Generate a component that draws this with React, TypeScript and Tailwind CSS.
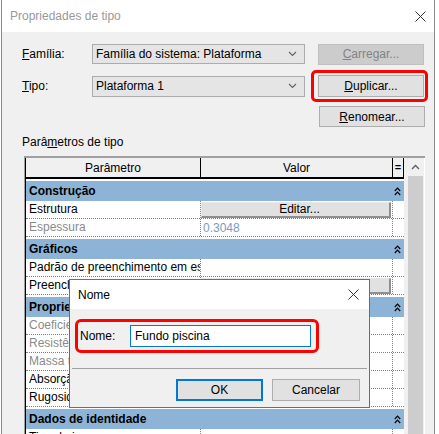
import type { ReactNode } from 'react';

const font = { fontFamily: '"Liberation Sans", Arial, sans-serif' };

type Item = { p: string; v?: string; dim?: boolean; button?: string };
type Group = { name: string; items: Item[] };

const groups: Group[] = [
  {
    name: 'Construção',
    items: [
      { p: 'Estrutura', button: 'Editar...' },
      { p: 'Espessura', v: '0.3048', dim: true },
    ],
  },
  {
    name: 'Gráficos',
    items: [
      { p: 'Padrão de preenchimento em escala grosseira' },
      { p: 'Preenchimento de cor em escala grosseira', button: 'Preto' },
    ],
  },
  {
    name: 'Propriedades analíticas',
    items: [
      { p: 'Coeficiente de transferência de calor (U)', dim: true },
      { p: 'Resistência térmica (R)', dim: true },
      { p: 'Massa térmica', dim: true },
      { p: 'Absorção', v: '0.700000' },
      { p: 'Rugosidade', v: '3' },
    ],
  },
  {
    name: 'Dados de identidade',
    items: [{ p: 'Tipo de imagem' }],
  },
];

function Chevron() {
  return (
    <svg width="9" height="6" viewBox="0 0 9 6" fill="none" stroke="#606060" strokeWidth="1.1" aria-hidden>
      <path d="M1 1l3.5 3.5L8 1" />
    </svg>
  );
}

function CloseX({ size = 11 }: { size?: number }) {
  return (
    <svg width={size} height={size} viewBox="0 0 11 11" fill="none" stroke="#333" strokeWidth="1" aria-hidden>
      <path d="M0.5 0.5l10 10M10.5 0.5l-10 10" />
    </svg>
  );
}

function Collapse() {
  return (
    <svg width="7" height="9" viewBox="0 0 7 9" fill="none" stroke="#000" strokeWidth="1.2" aria-hidden>
      <path d="M0.8 4L3.5 1.2 6.2 4" />
      <path d="M0.8 8L3.5 5.2 6.2 8" />
    </svg>
  );
}

function WinButton({ children, disabled }: { children: ReactNode; disabled?: boolean }) {
  return (
    <div
      className={
        disabled
          ? 'flex h-full w-full items-center justify-center border border-[#bfbfbf] bg-[#cccccc] text-[12px] text-[#838383]'
          : 'flex h-full w-full items-center justify-center border border-[#adadad] bg-[#e1e1e1] text-[12px] text-black'
      }
    >
      {children}
    </div>
  );
}

function Combo({ text }: { text: string }) {
  return (
    <div className="flex h-full w-[213px] items-center border border-[#acacac] bg-[#e5e5e5] pl-[3px] pr-[7px] text-[12px]">
      <span className="flex-1">{text}</span>
      <Chevron />
    </div>
  );
}

export default function App() {
  return (
    <div className="relative h-[434px] w-[439px] overflow-hidden bg-white text-black" style={font}>
      <div className="ml-[1px] flex h-full w-[434px] flex-col border-x border-[#8a8a8a]">
        <div className="flex h-[32px] shrink-0 items-center justify-between bg-white pl-[8px] pr-[8px]">
          <span className="text-[12px] text-[#999999]">Propriedades de tipo</span>
          <CloseX size={11} />
        </div>

        <div className="flex flex-1 flex-col bg-[#f0f0f0] pl-[20px] pr-[9px] pt-[12px] text-[12px]">
          <div className="flex h-[20px] items-center">
            <span className="w-[70px]">
              <span className="underline">F</span>amília:
            </span>
            <Combo text="Família do sistema: Plataforma" />
            <div className="ml-[13px] h-[21px] w-[106px]">
              <WinButton disabled>
                <span className="underline">C</span>arregar...
              </WinButton>
            </div>
          </div>

          <div className="mt-[11px] flex h-[22px] items-center">
            <span className="w-[70px]">
              <span className="underline">T</span>ipo:
            </span>
            <div className="h-[21px]">
              <Combo text="Plataforma 1" />
            </div>
            <div className="relative ml-[13px] h-[22px] w-[106px]">
              <WinButton>
                <span className="underline">D</span>uplicar...
              </WinButton>
              <span className="absolute -bottom-[5px] -left-[7px] -right-[4px] -top-[5px] rounded-[5px] border-[3px] border-[#ff0000]" />
            </div>
          </div>

          <div className="mt-[9px] flex h-[21px] justify-end">
            <div className="w-[106px]">
              <WinButton>
                <span className="underline">R</span>enomear...
              </WinButton>
            </div>
          </div>

          <div className="mt-[8px] leading-[15px]">
            Parâ<span className="underline">m</span>etros de tipo
          </div>

          <div className="ml-[2px] mt-[6px] flex flex-1 border-l border-t-2 border-[#a0a0a0] bg-white">
            <div className="flex w-[379px] flex-col border-l border-black">
              <div className="grid h-[21px] grid-cols-[175px_192px_11px] border-b-2 border-black bg-[#f0f0f0]">
                <div className="flex items-center justify-center border-r border-black">Parâmetro</div>
                <div className="flex items-center justify-center border-r border-black">Valor</div>
                <div className="flex items-center justify-center border-r border-black text-[11px] font-bold">=</div>
              </div>

              {groups.map((g) => (
                <div key={g.name} className="flex flex-col">
                  <div className="mt-[2px] flex h-[20px] items-center justify-between bg-[#8db4d6] pl-[3px] pr-[3px] font-bold">
                    <span>{g.name}</span>
                    <Collapse />
                  </div>
                  {g.items.map((it) => (
                    <div
                      key={it.p}
                      className="grid h-[18px] grid-cols-[175px_192px_11px] border-b border-dotted border-[#808080]"
                    >
                      <div
                        className={
                          it.dim
                            ? 'overflow-hidden whitespace-nowrap border-r border-dotted border-[#808080] pl-[3px] leading-[17px] text-[#8a8a8a]'
                            : 'overflow-hidden whitespace-nowrap border-r border-dotted border-[#808080] pl-[3px] leading-[17px]'
                        }
                      >
                        {it.p}
                      </div>
                      <div className="flex items-center overflow-hidden border-r border-dotted border-[#808080] pr-[1px]">
                        {it.button ? (
                          <div className="flex h-[16px] w-full items-center justify-center border-b-2 border-r-2 border-l border-t border-b-[#8f8f8f] border-l-[#e8e8e8] border-r-[#8f8f8f] border-t-[#e8e8e8] bg-[#e1e1e1] pl-[8px]">
                            {it.p === 'Estrutura' ? it.button : ''}
                          </div>
                        ) : (
                          <span className={it.dim ? 'pl-[2px] text-[#7a9bbd]' : 'pl-[2px]'}>{it.v}</span>
                        )}
                      </div>
                      <div />
                    </div>
                  ))}
                </div>
              ))}
            </div>

            <div className="flex w-[20px] flex-col bg-[#f0f0f0] pl-[4px]">
              <div className="flex h-[18px] w-[15px] items-center justify-center">
                <svg width="9" height="6" viewBox="0 0 9 6" fill="none" stroke="#606060" strokeWidth="1.4" aria-hidden>
                  <path d="M1 5l3.5-3.5L8 5" />
                </svg>
              </div>
              <div className="w-[15px] flex-1 bg-[#cdcdcd]" />
            </div>
          </div>
        </div>
      </div>

      <div className="absolute left-[69px] top-[279px] flex h-[129px] w-[301px] flex-col border border-[#1883d7] bg-[#f0f0f0] text-[12px]">
        <div className="flex h-[29px] items-center justify-between bg-white pl-[8px] pr-[10px]">
          <span className="text-[12px]">Nome</span>
          <CloseX size={11} />
        </div>
        <div className="ml-[5px] mt-[10px] flex h-[34px] w-[244px] items-center rounded-[6px] border-[3px] border-[#ff0000] pl-[2px]">
          <span className="w-[50px]">Nome:</span>
          <div className="flex h-[22px] w-[181px] items-center border border-[#0078d7] bg-white pl-[4px]">
            Fundo piscina
          </div>
        </div>
        <div className="mx-[2px] mt-[15px] h-px bg-[#a0a0a0]" />
        <div className="mt-[10px] flex justify-end gap-[9px] pr-[9px]">
          <div className="flex h-[22px] w-[87px] items-center justify-center border-2 border-[#0078d7] bg-[#e1e1e1]">OK</div>
          <div className="flex h-[22px] w-[88px] items-center justify-center border border-[#adadad] bg-[#e1e1e1]">Cancelar</div>
        </div>
      </div>
    </div>
  );
}
